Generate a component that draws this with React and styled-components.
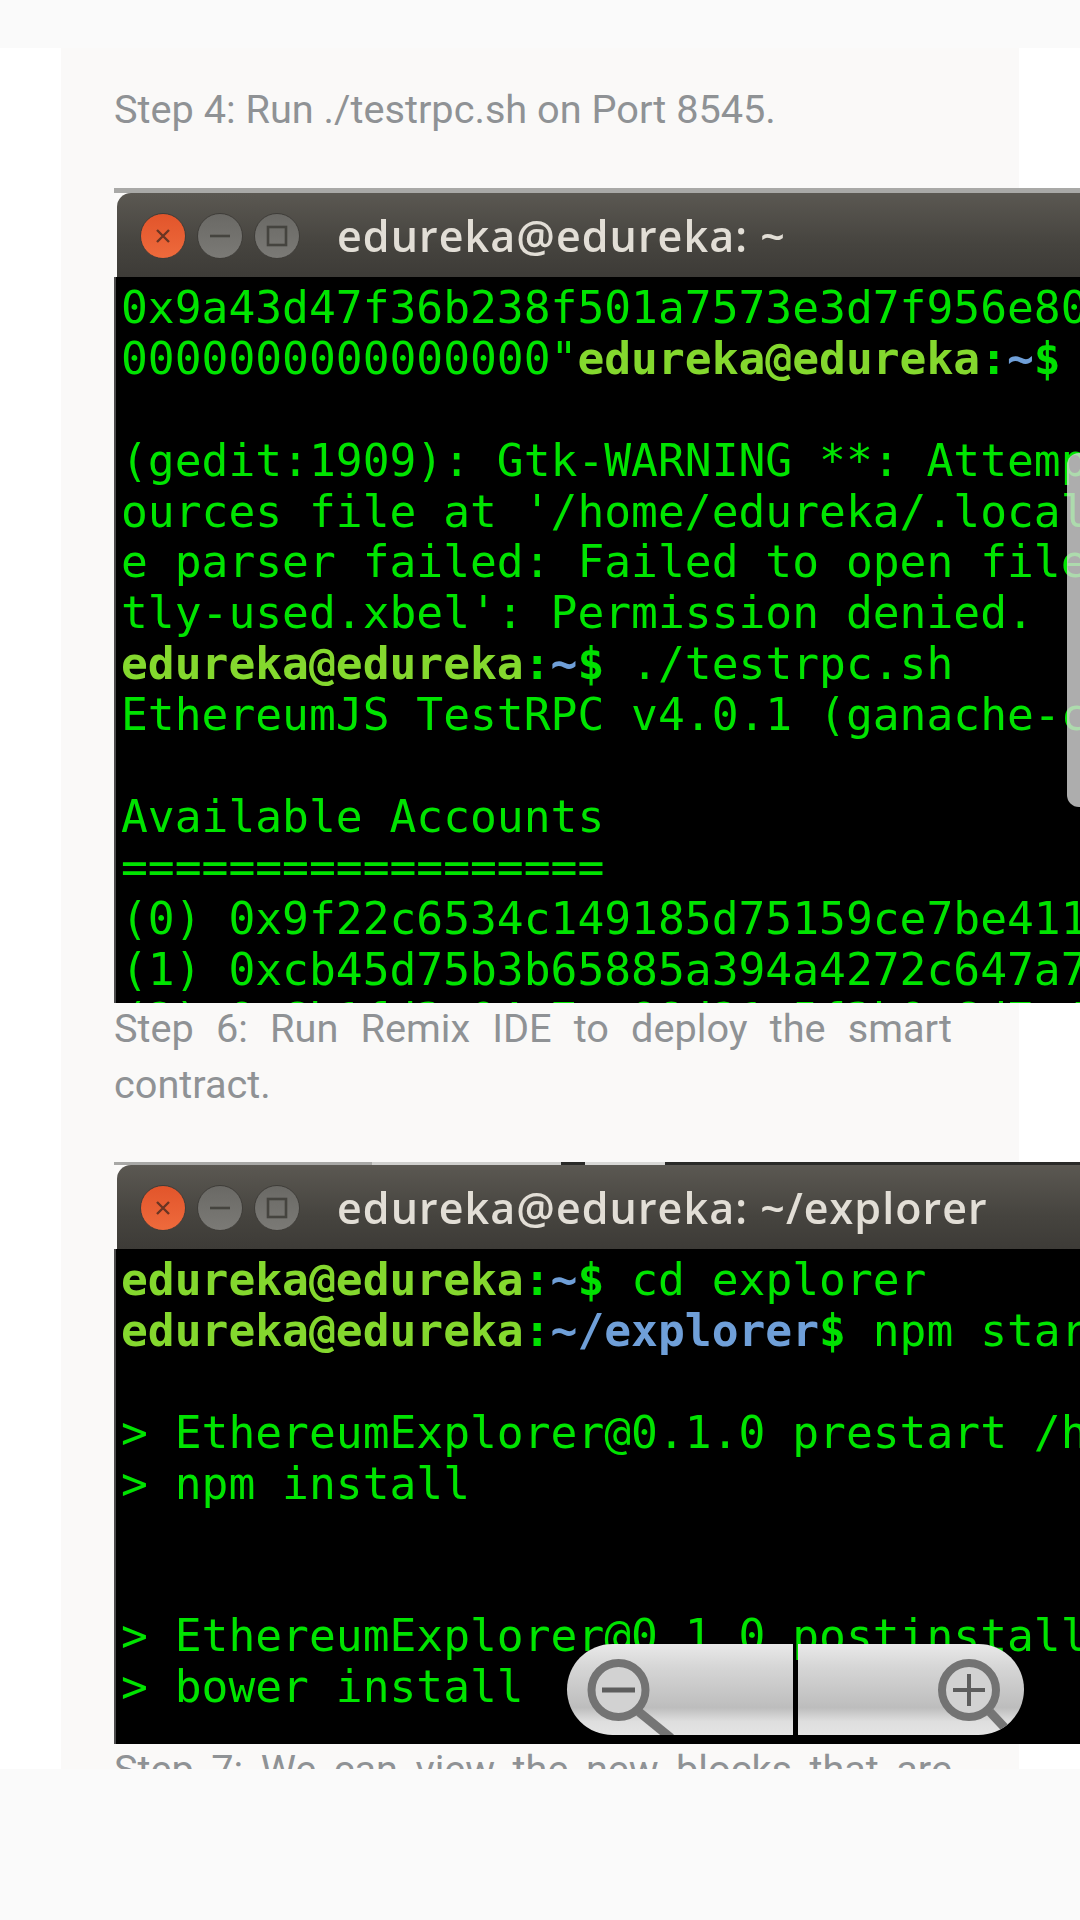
import React from 'react';
import styled, { createGlobalStyle } from 'styled-components';

const Global = createGlobalStyle`
  html, body { margin: 0; padding: 0; background: #fafafa; }
  body { width: 1080px; height: 1920px; overflow: hidden; }
`;

const TopBar = styled.div`
  height: 48px;
  background: #fafafa;
`;

const Main = styled.main`
  height: 1721px;
  background: #fff;
  overflow: hidden;
`;

const BottomBar = styled.div`
  height: 151px;
  background: #fafafa;
`;

const Article = styled.article`
  width: 958px;
  height: 100%;
  box-sizing: border-box;
  margin-left: 61px;
  padding: 34px 67px 0 53px;
  background: #faf9f8;
`;

const Para = styled.p`
  margin: ${({ $top }) => $top || 0}px 0 ${({ $bottom }) => $bottom || 0}px;
  font-family: Roboto, "Liberation Sans", sans-serif;
  font-weight: 400;
  font-size: 39.7px;
  line-height: 56px;
  color: #8f9295;
  text-align: justify;
`;

const Frame = styled.div`
  position: relative;
  width: 966px;
  height: ${({ $height }) => $height}px;
  overflow: hidden;
  background: #fbfaf9;
`;

const EdgeStrip = styled.div`
  display: flex;
  height: ${({ $height }) => $height}px;
  background: #2a2a28;
`;

const EdgePiece = styled.div`
  width: ${({ $width }) => $width}px;
  background: ${({ $color }) => $color};
`;

const TitleBar = styled.div`
  display: flex;
  align-items: center;
  height: 84px;
  margin-left: 3px;
  padding-left: 23px;
  border-radius: 14px 0 0 0;
  background: linear-gradient(#5b5852, #46443f 60%, #3d3b37);
  filter: blur(0.6px);
`;

const WinButtons = styled.div`
  display: flex;
  gap: 11px;
  margin-top: 2px;
`;

const WinButton = styled.div`
  display: flex;
  align-items: center;
  justify-content: center;
  width: 46px;
  height: 46px;
  box-sizing: border-box;
  border-radius: 50%;
  border: 1px solid #3f3d39;
  background: ${({ $close }) =>
    $close ? 'linear-gradient(#e2552b, #ee6a3c)' : 'linear-gradient(#6a6965, #7b7a76)'};
`;

const WinTitle = styled.div`
  margin-left: 37px;
  font-family: "Open Sans", "Liberation Sans", sans-serif;
  font-weight: 600;
  font-size: 43px;
  letter-spacing: 1.07px;
  line-height: 1;
  white-space: nowrap;
  color: #e2ded6;
`;

const Terminal = styled.div`
  height: 100%;
  box-sizing: border-box;
  padding: 6px 0 0 5px;
  border-left: 2px solid #4c4c4c;
  background: #000;
  font-family: "DejaVu Sans Mono", "Liberation Mono", monospace;
  font-size: 44.6px;
  line-height: 51px;
  color: #00e400;
  white-space: pre;
  filter: blur(0.6px);
`;

const TermLine = styled.div`
  height: 50.9px;
`;

const Prompt = styled.span`
  font-weight: 700;
  color: ${({ $kind }) => ($kind === 'path' ? '#6f9fd8' : $kind === 'plain' ? '#00e000' : '#84d82e')};
`;

const ScrollPanel = styled.div`
  position: absolute;
  top: 265px;
  right: 0;
  width: 13px;
  height: 354px;
  border-radius: 12px 0 0 12px;
  background: rgba(216, 216, 216, 0.8);
`;

const ZoomPill = styled.div`
  position: absolute;
  right: 56px;
  bottom: 9px;
  display: flex;
  gap: 5px;
  height: 91px;
`;

const ZoomHalf = styled.div`
  display: flex;
  justify-content: ${({ $side }) => ($side === 'left' ? 'flex-start' : 'flex-end')};
  width: 226px;
  height: 100%;
  overflow: hidden;
  border-radius: ${({ $side }) => ($side === 'left' ? '46px 0 0 46px' : '0 46px 46px 0')};
  background: linear-gradient(#e9e9e9, #d6d6d6 25%, #bdbdbd 70%, #dedede 85%, #e4e4e4);
`;

const CloseIcon = () => (
  <svg width="18" height="18" viewBox="0 0 18 18" fill="none" stroke="#6a3523" strokeWidth="2.4">
    <path d="M3 3l12 12M15 3L3 15" />
  </svg>
);

const MinIcon = () => (
  <svg width="22" height="6" viewBox="0 0 22 6" fill="none" stroke="#45443f" strokeWidth="2.6">
    <path d="M1 3h20" />
  </svg>
);

const MaxIcon = () => (
  <svg width="22" height="22" viewBox="0 0 22 22" fill="none" stroke="#45443f" strokeWidth="2.6">
    <rect x="2" y="2" width="18" height="18" />
  </svg>
);

const Magnifier = ({ plus }) => (
  <svg width="110" height="91" viewBox="0 0 110 91" fill="none">
    <path d={plus ? 'M76 68l30 32' : 'M72 68l32 26'} stroke="#757575" strokeWidth="9" />
    <circle cx={plus ? 55 : 51.5} cy="46" r="27" fill="#d2d2d2" stroke="#737373" strokeWidth="8" />
    {plus ? (
      <path d="M39 46h32M55 30v32" stroke="#5d5d5d" strokeWidth="4" />
    ) : (
      <path d="M35 46h33" stroke="#5d5d5d" strokeWidth="5" />
    )}
  </svg>
);

const WindowBar = ({ title }) => (
  <TitleBar>
    <WinButtons>
      <WinButton $close><CloseIcon /></WinButton>
      <WinButton><MinIcon /></WinButton>
      <WinButton><MaxIcon /></WinButton>
    </WinButtons>
    <WinTitle>{title}</WinTitle>
  </TitleBar>
);

const App = () => (
  <>
    <Global />
    <TopBar />
    <Main>
      <Article>
        <Para $bottom={50}>Step 4: Run ./testrpc.sh on Port 8545.</Para>

        <Frame $height={815}>
          <EdgeStrip $height={5}>
            <EdgePiece $width={966} $color="#a9a9a7" />
          </EdgeStrip>
          <WindowBar title="edureka@edureka: ~" />
          <Terminal>
            <TermLine>0x9a43d47f36b238f501a7573e3d7f956e80c1a2b4</TermLine>
            <TermLine>0000000000000000"<Prompt>edureka@edureka</Prompt><Prompt $kind="plain">:</Prompt><Prompt $kind="path">~</Prompt><Prompt $kind="plain">$</Prompt></TermLine>
            <TermLine />
            <TermLine>(gedit:1909): Gtk-WARNING **: Attempting to set</TermLine>
            <TermLine>ources file at '/home/edureka/.local/share/recently</TermLine>
            <TermLine>e parser failed: Failed to open file</TermLine>
            <TermLine>tly-used.xbel': Permission denied.</TermLine>
            <TermLine><Prompt>edureka@edureka</Prompt><Prompt $kind="plain">:</Prompt><Prompt $kind="path">~</Prompt><Prompt $kind="plain">$</Prompt> ./testrpc.sh</TermLine>
            <TermLine>EthereumJS TestRPC v4.0.1 (ganache-core: 1.0.1)</TermLine>
            <TermLine />
            <TermLine>Available Accounts</TermLine>
            <TermLine>==================</TermLine>
            <TermLine>(0) 0x9f22c6534c149185d75159ce7be41180a6c2e1d4</TermLine>
            <TermLine>(1) 0xcb45d75b3b65885a394a4272c647a7b8e5f0c9a2</TermLine>
            <TermLine>(2) 0x6b1fd3c04e7aa98d21c5f3b0e6d7a4c9b2e80f17</TermLine>
          </Terminal>
          <ScrollPanel />
        </Frame>

        <Para $top={-2} $bottom={49}>Step 6: Run Remix IDE to deploy the smart contract.</Para>

        <Frame $height={582}>
          <EdgeStrip $height={3}>
            <EdgePiece $width={258} $color="#a8a8a6" />
            <EdgePiece $width={189} $color="#cfcfcd" />
            <EdgePiece $width={24} $color="#2a2a28" />
            <EdgePiece $width={80} $color="#d8d8d6" />
          </EdgeStrip>
          <WindowBar title="edureka@edureka: ~/explorer" />
          <Terminal>
            <TermLine><Prompt>edureka@edureka</Prompt><Prompt $kind="plain">:</Prompt><Prompt $kind="path">~</Prompt><Prompt $kind="plain">$</Prompt> cd explorer</TermLine>
            <TermLine><Prompt>edureka@edureka</Prompt><Prompt $kind="plain">:</Prompt><Prompt $kind="path">~/explorer</Prompt><Prompt $kind="plain">$</Prompt> npm start</TermLine>
            <TermLine />
            <TermLine>&gt; EthereumExplorer@0.1.0 prestart /home/edureka</TermLine>
            <TermLine>&gt; npm install</TermLine>
            <TermLine />
            <TermLine />
            <TermLine>&gt; EthereumExplorer@0.1.0 postinstall /home/edureka</TermLine>
            <TermLine>&gt; bower install</TermLine>
          </Terminal>
          <ZoomPill>
            <ZoomHalf $side="left"><Magnifier /></ZoomHalf>
            <ZoomHalf $side="right"><Magnifier plus /></ZoomHalf>
          </ZoomPill>
        </Frame>

        <Para $top={-2}>Step 7: We can view the new blocks that are created on the blockchain.</Para>
      </Article>
    </Main>
    <BottomBar />
  </>
);

export default App;
